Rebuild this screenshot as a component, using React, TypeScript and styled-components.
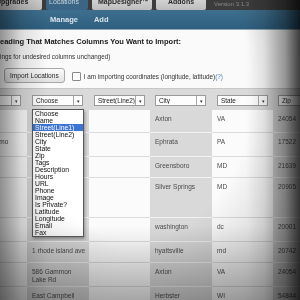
import React from "react";
import styled, { createGlobalStyle } from "styled-components";

const GlobalStyle = createGlobalStyle`
  html, body {
    margin: 0;
    padding: 0;
    background: #fff;
  }
`;

const Page = styled.div`
  position: relative;
  width: 300px;
  height: 300px;
  overflow: hidden;
  background: #fafafa;
  font-family: "Liberation Sans", Arial, sans-serif;
  filter: blur(0.35px);
`;

const TabBar = styled.div`
  height: 10px;
  background: #3c3c3c;
  display: flex;
  align-items: flex-end;
  overflow: hidden;
`;

const Tab = styled.div<{ $active?: boolean; $w: number; $pad: number }>`
  width: ${(p) => p.$w}px;
  height: 14px;
  margin-top: -4px;
  margin-right: 4px;
  box-sizing: border-box;
  padding-left: ${(p) => p.$pad}px;
  padding-top: 2px;
  background: ${(p) => (p.$active ? "#3a6584" : "linear-gradient(#dadada, #bdbdbd)")};
  color: ${(p) => (p.$active ? "#c9d6df" : "#2a2a2a")};
  font-size: 7px;
  font-weight: ${(p) => (p.$active ? "normal" : "bold")};
  line-height: 8px;
  border-radius: 0 0 2px 2px;
  white-space: nowrap;
`;

const Version = styled.div`
  margin-left: 4px;
  font-size: 6px;
  line-height: 8px;
  color: #8a8a8a;
  align-self: flex-start;
  margin-top: 0px;
`;

const SubNav = styled.div`
  height: 19px;
  display: flex;
  align-items: center;
  gap: 16px;
  padding-left: 50px;
  background: linear-gradient(#3f6f8e, #2f5f7f);
  border-bottom: 1px solid #8fa9b9;
`;

const NavLink = styled.span`
  font-size: 7.5px;
  font-weight: bold;
  color: #d8e2ea;
`;

const Content = styled.div`
  padding-top: 7px;
`;

const Heading = styled.div`
  font-size: 7.5px;
  font-weight: bold;
  line-height: 10px;
  color: #1a1a1a;
  white-space: nowrap;
`;

const Hint = styled.div`
  margin-top: 5px;
  font-size: 6.3px;
  line-height: 10px;
  color: #333;
  white-space: nowrap;
`;

const ActionRow = styled.div`
  margin-top: 6px;
  display: flex;
  align-items: center;
  padding-left: 4px;
`;

const Button = styled.div`
  height: 15px;
  box-sizing: border-box;
  padding: 0 5px;
  display: flex;
  align-items: center;
  border: 1px solid #a8a8a8;
  border-radius: 3px;
  background: linear-gradient(#fbfbfb, #e2e2e2);
  font-size: 6.6px;
  color: #2a2a2a;
`;

const Check = styled.span`
  width: 7px;
  height: 7px;
  margin-left: 7px;
  margin-right: 3px;
  margin-top: 2px;
  border: 1px solid #8a8a8a;
  border-radius: 1px;
  background: #fff;
`;

const CheckLabel = styled.span`
  font-size: 6.4px;
  color: #333;
  margin-top: 2px;
  white-space: nowrap;
`;

const Help = styled.span`
  color: #4a7fc0;
`;

const Table = styled.div`
  margin-top: 5px;
  margin-left: -35px;
  display: grid;
  grid-template-columns: 62px 62px 61px 62px 61px 62px;
  grid-template-rows: 22px 23px 24px 21px 40px 24px 21px 24px 30px;
`;

const HeadCell = styled.div`
  background: #dadada;
  border-top: 1px solid #c8c8c8;
  box-sizing: border-box;
  padding: 6px 0 0 5px;
`;

const Select = styled.div`
  width: 51px;
  height: 11px;
  box-sizing: border-box;
  display: flex;
  align-items: center;
  background: #fdfdfd;
  border: 1px solid #9a9a9a;
  font-size: 6.4px;
  color: #222;
`;

const SelectText = styled.span`
  flex: 1;
  padding-left: 3px;
  white-space: nowrap;
  overflow: hidden;
`;

const SelectArrow = styled.span`
  width: 8px;
  height: 100%;
  border-left: 1px solid #a8a8a8;
  display: flex;
  align-items: center;
  justify-content: center;
  font-size: 5px;
  color: #333;
`;

const Cell = styled.div<{ $shade: boolean }>`
  background: ${(p) => (p.$shade ? "#d9d9d9" : "#fbfbfb")};
  border-bottom: 1px solid ${(p) => (p.$shade ? "#f2f2f2" : "#dcdcdc")};
  box-sizing: border-box;
  padding: 5px 0 0 5px;
  font-size: 6.5px;
  line-height: 8px;
  color: #4a4a4a;
  overflow: hidden;
  white-space: pre;
`;

const Dropdown = styled.div`
  position: absolute;
  left: 32px;
  top: 109px;
  width: 52px;
  box-sizing: border-box;
  background: #fff;
  border: 1px solid #5a5a5a;
  box-shadow: 1px 2px 3px rgba(0, 0, 0, 0.35);
`;

const Option = styled.div<{ $selected?: boolean }>`
  height: 7px;
  line-height: 7px;
  padding-left: 2px;
  font-size: 6.8px;
  color: ${(p) => (p.$selected ? "#fff" : "#111")};
  background: ${(p) => (p.$selected ? "#3b74d4" : "transparent")};
  white-space: nowrap;
`;

const Vignette = styled.div`
  position: absolute;
  inset: 0;
  pointer-events: none;
  background:
    linear-gradient(to right, rgba(0, 0, 0, 0.38) 0%, rgba(0, 0, 0, 0.12) 7%, rgba(0, 0, 0, 0) 16%),
    linear-gradient(to left, rgba(0, 0, 0, 0.72) 0%, rgba(0, 0, 0, 0.35) 5%, rgba(0, 0, 0, 0.08) 12%, rgba(0, 0, 0, 0) 18%),
    linear-gradient(to top, rgba(0, 0, 0, 0.25) 0%, rgba(0, 0, 0, 0) 25%),
    radial-gradient(ellipse at 45% 30%, rgba(0, 0, 0, 0) 50%, rgba(0, 0, 0, 0.28) 100%);
`;

const headers = ["Choose", "Choose", "Street(Line2)", "City", "State", "Zip"];

const rows: string[][] = [
  ["", "", "", "Axton", "VA", "24054"],
  ["Promo Demo", "", "", "Ephrata", "PA", "17522"],
  ["", "", "", "Greensboro", "MD", "21639"],
  ["", "", "", "Silver Springs", "MD", "20905"],
  ["", "3000 Connecticut\nAve md", "", "washington", "dc", "20001"],
  ["", "1 rhode island ave", "", "hyattsville", "md", "20742"],
  ["", "586 Gammon\nLake Rd", "", "Axton", "VA", "24054"],
  ["", "East Campbell", "", "Herbster", "WI", "54844"],
];

const options = [
  "Choose",
  "Name",
  "Street(Line1)",
  "Street(Line2)",
  "City",
  "State",
  "Zip",
  "Tags",
  "Description",
  "Hours",
  "URL",
  "Phone",
  "Image",
  "Is Private?",
  "Latitude",
  "Longitude",
  "Email",
  "Fax",
];

export default function App() {
  return (
    <>
      <GlobalStyle />
      <Page>
        <TabBar>
          <Tab $w={46} $pad={0} style={{ marginLeft: -4 }}>
            Upgrades
          </Tab>
          <Tab $w={42} $pad={3} $active>
            Locations
          </Tab>
          <Tab $w={60} $pad={6}>
            MapDesigner™
          </Tab>
          <Tab $w={50} $pad={12}>
            Addons
          </Tab>
          <Version>Version 3.1.3</Version>
        </TabBar>
        <SubNav>
          <NavLink>Manage</NavLink>
          <NavLink>Add</NavLink>
        </SubNav>
        <Content>
          <Heading>eading That Matches Columns You Want to Import:</Heading>
          <Hint>ings for undesired columns unchanged)</Hint>
          <ActionRow>
            <Button>Import Locations</Button>
            <Check />
            <CheckLabel>
              I am importing coordinates (longitude, latitude)<Help>(?)</Help>
            </CheckLabel>
          </ActionRow>
          <Table>
            {headers.map((h, i) => (
              <HeadCell key={"h" + i}>
                <Select>
                  <SelectText>{h}</SelectText>
                  <SelectArrow>▾</SelectArrow>
                </Select>
              </HeadCell>
            ))}
            {rows.map((r, ri) =>
              r.map((c, ci) => (
                <Cell key={ri + "-" + ci} $shade={ci % 2 === 1}>
                  {c}
                </Cell>
              ))
            )}
          </Table>
        </Content>
        <Dropdown>
          {options.map((o) => (
            <Option key={o} $selected={o === "Street(Line1)"}>
              {o}
            </Option>
          ))}
        </Dropdown>
        <Vignette />
      </Page>
    </>
  );
}
